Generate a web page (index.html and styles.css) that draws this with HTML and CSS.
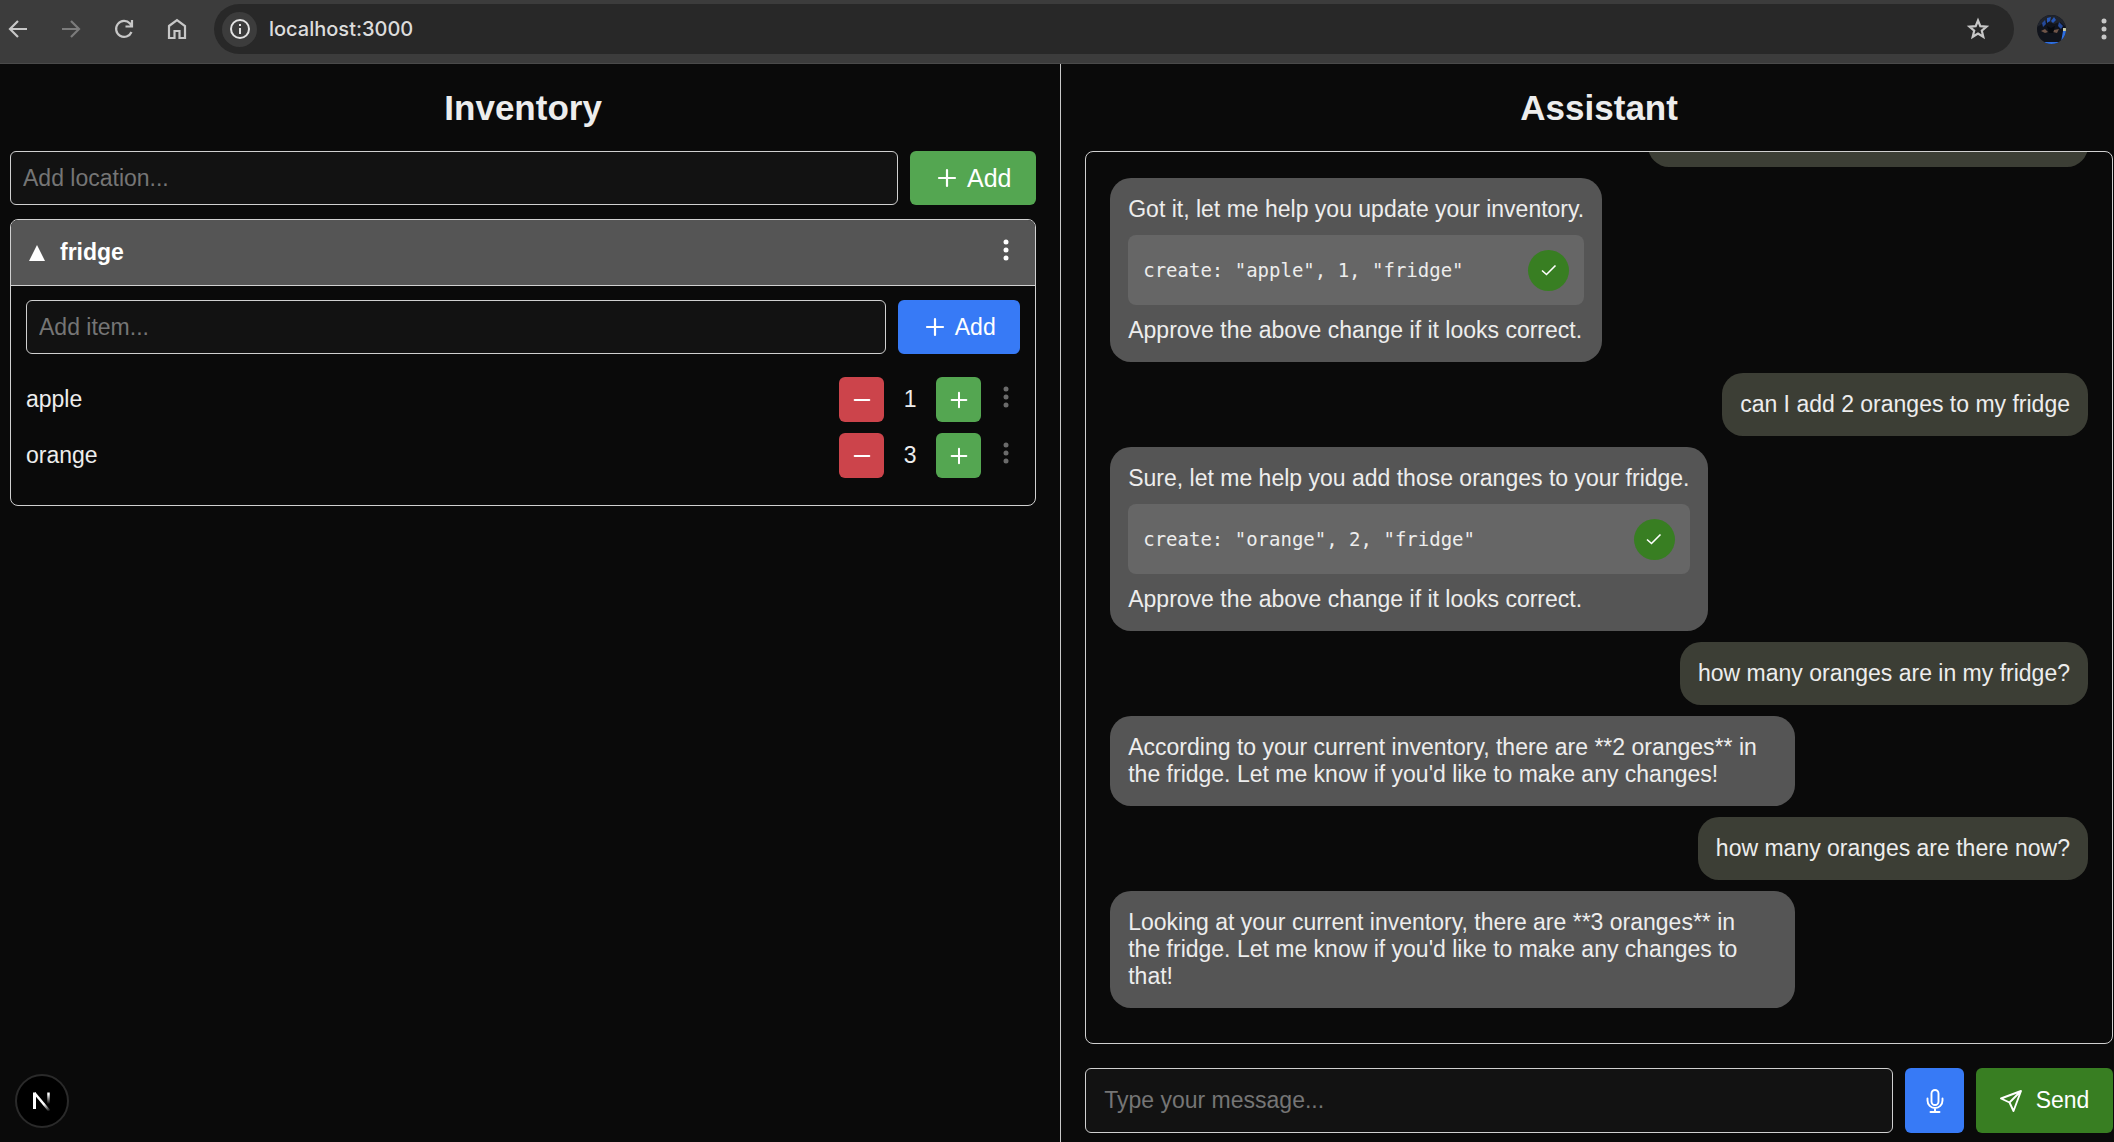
FILE: index.html
```html
<!DOCTYPE html>
<html lang="en">
<head>
<meta charset="utf-8">
<title>Inventory Assistant</title>
<link rel="stylesheet" href="styles.css">
</head>
<body>
<svg class="sprite" aria-hidden="true">
  <symbol id="plus" viewBox="0 0 24 24"><path d="M12 4V20M4 12H20" fill="none" stroke="currentColor" stroke-width="2.200" stroke-linecap="round"/></symbol>
  <symbol id="minus" viewBox="0 0 24 24"><path d="M4 12H20" fill="none" stroke="currentColor" stroke-width="2.200" stroke-linecap="round"/></symbol>
  <symbol id="dots" viewBox="0 0 8 24"><g fill="currentColor"><circle cx="4" cy="4" r="2.500"/><circle cx="4" cy="12" r="2.500"/><circle cx="4" cy="20" r="2.500"/></g></symbol>
  <symbol id="check" viewBox="0 0 16 12"><path d="M1 6.500L5.500 10.500L14.500 1.500" fill="none" stroke="currentColor" stroke-width="1.600"/></symbol>
</svg>

<header class="toolbar">
  <button class="tool" aria-label="Back"><svg width="20" height="20" viewBox="0 0 20 20"><path d="M19 10H2.500M10 2L2 10L10 18" fill="none" stroke="currentColor" stroke-width="2.200"/></svg></button>
  <button class="tool tool-off" aria-label="Forward"><svg width="20" height="20" viewBox="0 0 20 20"><path d="M1 10H17.500M10 2L18 10L10 18" fill="none" stroke="currentColor" stroke-width="2.200"/></svg></button>
  <button class="tool" aria-label="Reload"><svg width="20" height="20" viewBox="0 0 20 20"><path d="M17.500 13A8 8 0 1 1 16 4.500L17.500 6.500M18 1V7.500H11.500" fill="none" stroke="currentColor" stroke-width="2.200"/></svg></button>
  <button class="tool" aria-label="Home"><svg width="20" height="22" viewBox="0 0 20 22"><path d="M2 8L10 2L18 8V20H12.500V13H7.500V20H2Z" fill="none" stroke="currentColor" stroke-width="2.200"/></svg></button>
  <div class="address">
    <button class="site-info" aria-label="Site information"><svg width="20" height="20" viewBox="0 0 20 20"><circle cx="10" cy="10" r="9" fill="none" stroke="currentColor" stroke-width="2"/><path d="M10 9V15M10 5V7" stroke="currentColor" stroke-width="2"/></svg></button>
    <input class="url" aria-label="Address" value="localhost:3000">
    <button class="tool" aria-label="Bookmark"><svg width="24" height="24" viewBox="0 0 24 24"><path d="M12 3.500L14.300 9.200L20.500 9.700L15.800 13.700L17.300 19.800L12 16.500L6.700 19.800L8.200 13.700L3.500 9.700L9.700 9.200Z" fill="none" stroke="currentColor" stroke-width="2.200"/></svg></button>
  </div>
  <button class="avatar" aria-label="Profile">
    <svg width="29" height="29" viewBox="0 0 29 29">
      <defs><clipPath id="round"><circle cx="14.500" cy="14.500" r="14.500"/></clipPath></defs>
      <g clip-path="url(#round)">
        <rect width="29" height="29" fill="#11141c"/>
        <path d="M0 0H29V12L23 7L17 9L10 6L0 12Z" fill="#20242d"/>
        <path d="M10 3L14 2L13 6L10 8ZM17 2L19 5L16 8L14 6Z" fill="#2657b8"/>
        <path d="M5 8L8 5L9 9L6 12ZM22 7L26 11L24 14L21 11Z" fill="#24499a"/>
        <path d="M4 16L8 14L11 17L8 18ZM17 15L22 14L20 18L16 17Z" fill="#6f5448"/>
        <path d="M10 11L14 13L18 11L16 18H12Z" fill="#07090d"/>
        <path d="M26 13H29V16H26Z" fill="#c9cba8"/>
        <path d="M26 16H29V29H6V27H24Z" fill="#2f6fe0"/>
      </g>
    </svg>
  </button>
  <button class="tool tool-edge" aria-label="Menu"><svg width="8" height="24"><use href="#dots"/></svg></button>
</header>

<main class="app">
  <section class="inventory">
    <h1>Inventory</h1>
    <form class="row">
      <input class="field" type="text" placeholder="Add location..." aria-label="Add location">
      <button class="btn add-location" type="button"><svg width="24" height="24"><use href="#plus"/></svg>Add</button>
    </form>
    <article class="card">
      <header class="card-head">
        <svg width="16" height="16" viewBox="0 0 16 16"><path d="M8 0L16 16H0Z" fill="currentColor"/></svg>
        <h2>fridge</h2>
        <button class="more" aria-label="Location options"><svg width="8" height="24"><use href="#dots"/></svg></button>
      </header>
      <div class="card-body">
        <form class="row">
          <input class="field" type="text" placeholder="Add item..." aria-label="Add item">
          <button class="btn add-item" type="button"><svg width="24" height="24"><use href="#plus"/></svg>Add</button>
        </form>
        <ul class="items">
          <li class="item">
            <span class="name">apple</span>
            <button class="step minus" aria-label="Remove one apple"><svg width="22" height="22"><use href="#minus"/></svg></button>
            <span class="count">1</span>
            <button class="step plus" aria-label="Add one apple"><svg width="22" height="22"><use href="#plus"/></svg></button>
            <button class="more more-dim" aria-label="Apple options"><svg width="8" height="24"><use href="#dots"/></svg></button>
          </li>
          <li class="item">
            <span class="name">orange</span>
            <button class="step minus" aria-label="Remove one orange"><svg width="22" height="22"><use href="#minus"/></svg></button>
            <span class="count">3</span>
            <button class="step plus" aria-label="Add one orange"><svg width="22" height="22"><use href="#plus"/></svg></button>
            <button class="more more-dim" aria-label="Orange options"><svg width="8" height="24"><use href="#dots"/></svg></button>
          </li>
        </ul>
      </div>
    </article>
  </section>

  <section class="assistant">
    <h1>Assistant</h1>
    <div class="chat">
      <div class="msg user earlier"></div>
      <div class="msg bot">
        <p>Got it, let me help you update your inventory.</p>
        <div class="change"><code>create: "apple", 1, "fridge"</code><button class="approve" aria-label="Approved"><svg width="16" height="12"><use href="#check"/></svg></button></div>
        <p>Approve the above change if it looks correct.</p>
      </div>
      <div class="msg user"><p>can I add 2 oranges to my fridge</p></div>
      <div class="msg bot">
        <p>Sure, let me help you add those oranges to your fridge.</p>
        <div class="change"><code>create: "orange", 2, "fridge"</code><button class="approve" aria-label="Approved"><svg width="16" height="12"><use href="#check"/></svg></button></div>
        <p>Approve the above change if it looks correct.</p>
      </div>
      <div class="msg user"><p>how many oranges are in my fridge?</p></div>
      <div class="msg bot"><p>According to your current inventory, there are **2 oranges** in the&nbsp;fridge. Let me know if you'd like to make any changes!</p></div>
      <div class="msg user"><p>how many oranges are there now?</p></div>
      <div class="msg bot"><p>Looking at your current inventory, there are **3 oranges** in the&nbsp;fridge. Let me know if you'd like to make any changes to that!</p></div>
    </div>
    <form class="row compose">
      <input class="field" type="text" placeholder="Type your message..." aria-label="Message">
      <button class="btn mic" type="button" aria-label="Speak"><svg width="18" height="24" viewBox="0 0 18 24"><g fill="none" stroke="currentColor" stroke-width="1.900" stroke-linecap="round"><rect x="5.500" y="1" width="7" height="15" rx="3.500"/><path d="M1.500 9.500V11.500A7.500 7.500 0 0 0 16.500 11.500V9.500M9 19V23M4.500 23H13.500"/></g></svg></button>
      <button class="btn send" type="button"><svg width="22" height="22" viewBox="0 0 22 22"><path d="M1 8.500L21 1L13.500 21L9.500 12.500ZM9.500 12.500L21 1" fill="none" stroke="currentColor" stroke-width="1.900" stroke-linejoin="round"/></svg>Send</button>
    </form>
  </section>
</main>

<button class="dev-badge" aria-label="Developer tools">
  <svg width="20" height="20" viewBox="0 0 20 20">
    <defs>
      <linearGradient id="fade-v" gradientUnits="userSpaceOnUse" x1="0" y1="1" x2="0" y2="13"><stop offset="0.200" stop-color="#fff"/><stop offset="1" stop-color="#fff" stop-opacity="0"/></linearGradient>
      <linearGradient id="fade-d" gradientUnits="userSpaceOnUse" x1="12" y1="13" x2="18" y2="20"><stop offset="0" stop-color="#fff"/><stop offset="1" stop-color="#fff" stop-opacity="0"/></linearGradient>
    </defs>
    <path d="M2.500 18V1.500" stroke="#fff" stroke-width="3"/>
    <path d="M2.500 2L17.500 20" stroke="url(#fade-d)" stroke-width="2.500"/>
    <path d="M16.500 1.500V13" stroke="url(#fade-v)" stroke-width="2.500"/>
  </svg>
</button>
</body>
</html>
```
FILE: styles.css
```css
* { box-sizing: border-box; }

body {
  margin: 0;
  height: 100vh;
  display: flex;
  flex-direction: column;
  background: #0a0a0a;
  color: #ededed;
  font: 23px/27px "Liberation Sans", Arial, sans-serif;
}

button, input { font: inherit; color: inherit; }
button {
  display: flex;
  align-items: center;
  justify-content: center;
  flex: none;
  padding: 0;
  border: 0;
  background: none;
}
svg { display: block; flex: none; }
h1, h2, p, ul { margin: 0; }
.sprite { position: absolute; width: 0; height: 0; }

/* Browser toolbar */
.toolbar {
  display: flex;
  align-items: center;
  gap: 21px;
  height: 64px;
  padding: 0 0 5px 2px;
  background: #3c3c3c;
  border-bottom: 1px solid #4a4a4a;
}
.tool { width: 32px; height: 32px; color: #c7c7c7; }
.tool-off { color: #7c7c7c; }
.tool-edge { width: 20px; margin-left: 7px; }
.address {
  flex: 1;
  min-width: 0;
  display: flex;
  align-items: center;
  height: 50px;
  padding: 0 20px 0 8px;
  border-radius: 25px;
  background: #282828;
}
.site-info {
  width: 35px;
  height: 35px;
  border-radius: 50%;
  background: #3c3c3c;
  color: #e3e3e3;
}
.url {
  flex: 1;
  min-width: 0;
  margin-left: 12px;
  padding: 0;
  border: 0;
  outline: 0;
  background: none;
  color: #dcdcdc;
  font: 500 20px/27px Inter, sans-serif;
}
.avatar { width: 29px; height: 29px; margin-left: 2px; }

/* Two panes */
.app { flex: 1; min-height: 0; display: flex; }
.inventory {
  flex: none;
  width: 50.2%;
  padding: 0 24px 0 10px;
  border-right: 1px solid #c8c8c8;
}
.assistant {
  flex: 1;
  min-width: 0;
  display: flex;
  flex-direction: column;
  padding: 0 1px 9px 24px;
}
h1 {
  padding: 24px 0 23px;
  font-size: 35px;
  line-height: 40px;
  text-align: center;
}

.row { display: flex; gap: 12px; }
.field {
  flex: 1;
  min-width: 0;
  height: 54px;
  padding: 0 12px;
  border: 1px solid #d0d0d0;
  border-radius: 6px;
  outline: 0;
  background: #121212;
}
.field::placeholder { color: #757575; opacity: 1; }
.btn { gap: 8px; border-radius: 6px; color: #fff; }
.add-location { width: 126px; background: #54a651; font-size: 25px; }
.add-item { width: 122px; background: #377af6; }

.card {
  margin-top: 14px;
  border: 1px solid #d0d0d0;
  border-radius: 8px;
  overflow: hidden;
}
.card-head {
  display: flex;
  align-items: center;
  gap: 15px;
  height: 66px;
  padding: 0 18px;
  border-bottom: 1px solid #d0d0d0;
  background: #555;
  color: #fff;
}
h2 { flex: 1; font-size: 23px; line-height: 27px; }
.more { width: 22px; padding-bottom: 5px; }
.more-dim { color: #6b6b6b; }
.card-body { padding: 14px 15px 27px; }
.items {
  display: flex;
  flex-direction: column;
  gap: 11px;
  margin-top: 23px;
  padding: 0;
  list-style: none;
}
.item { display: flex; align-items: center; }
.name { flex: 1; }
.count { width: 52px; text-align: center; }
.step { width: 45px; height: 45px; border-radius: 6px; color: #fff; }
.minus { background: #cc444b; }
.plus { background: #54a651; }
.item .more { margin-left: 14px; margin-right: 3px; }

/* Conversation */
.chat {
  flex: 1;
  min-height: 0;
  display: flex;
  flex-direction: column;
  justify-content: flex-end;
  gap: 11px;
  padding: 0 24px 35px;
  border: 1px solid #d0d0d0;
  border-radius: 8px;
  overflow: hidden;
}
.msg {
  flex: none;
  max-width: 70%;
  min-height: 63px;
  padding: 18px;
  border-radius: 21px;
}
.bot { align-self: flex-start; background: #555; }
.user { align-self: flex-end; background: #3c3e35; }
.earlier { width: 45%; }
.change {
  display: flex;
  align-items: center;
  justify-content: space-between;
  height: 70px;
  margin: 12px 0;
  padding: 0 15px;
  border-radius: 8px;
  background: #666;
}
code { font: 19px/27px "DejaVu Sans Mono", monospace; }
.approve {
  width: 41px;
  height: 41px;
  border-radius: 50%;
  background: #387e22;
  color: #fff;
}

.compose { margin-top: 24px; }
.compose .field { height: 65px; padding: 0 18px; }
.mic { width: 59px; background: #377af6; }
.send { width: 137px; gap: 14px; background: #387e22; }

/* Floating badge over the page */
.dev-badge {
  position: fixed;
  left: 15px;
  bottom: 14px;
  width: 54px;
  height: 54px;
  border: 2px solid #2a2a2a;
  border-radius: 50%;
  background: #000;
}
```
